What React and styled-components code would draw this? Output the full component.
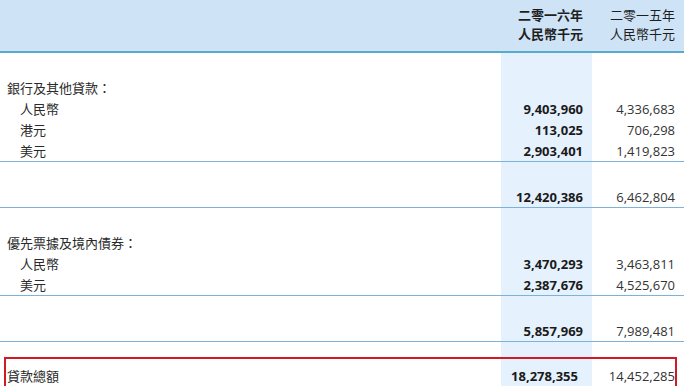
import React from "react";
import styled, { createGlobalStyle } from "styled-components";

const Global = createGlobalStyle`
  html, body { margin: 0; padding: 0; background: #ffffff; }
  body { font-family: "Open Sans", "Noto Sans CJK TC", sans-serif; }
`;

const Page = styled.div`
  width: 684px;
  height: 386px;
  overflow: hidden;
  background: #ffffff;
`;

const Header = styled.div`
  display: grid;
  grid-template-columns: 1fr 91px 92px;
  height: 51px;
  background: #cfe3f6;
  border-bottom: 2px solid #5aaacb;
  box-sizing: content-box;
`;

const HeadCell = styled.div`
  text-align: right;
  padding: 5px 9px 0 0;
  font-family: "Noto Sans CJK TC", sans-serif;
  font-size: 13px;
  line-height: 19px;
  color: #1e1e1e;
  font-weight: ${(p) => (p.$bold ? 700 : 400)};
`;

const Body = styled.div`
  background: linear-gradient(
    to right,
    transparent 501px,
    #e5f1fc 501px,
    #e5f1fc 592px,
    transparent 592px
  );
  padding-bottom: 20px;
`;

const Section = styled.div`
  padding-top: ${(p) => p.$top}px;
  border-bottom: ${(p) => (p.$line ? "1px solid #7db3da" : "none")};
`;

const TotalBox = styled.div`
  margin: 15px 7px 0 4px;
  border: 2px solid #d11a26;
  padding-top: 6px;
`;

const Row = styled.div`
  display: grid;
  grid-template-columns: 1fr 91px 92px;
  height: 21px;
  align-items: center;
`;

const Label = styled.div`
  font-family: "Noto Sans CJK TC", sans-serif;
  font-size: 13px;
  color: #2a2a2a;
  padding-left: ${(p) => p.$indent}px;
  white-space: nowrap;
`;

const Num = styled.div`
  text-align: right;
  font-family: "Open Sans", sans-serif;
  font-size: 13px;
  padding-right: ${(p) => p.$pr ?? 9}px;
  color: ${(p) => (p.$bold ? "#1a1a1a" : "#333333")};
  font-weight: ${(p) => (p.$bold ? 700 : 400)};
`;

function Line({ label, indent = 7, a, b, pa, pb }) {
  return (
    <Row>
      <Label $indent={indent}>{label}</Label>
      <Num $bold $pr={pa}>{a}</Num>
      <Num $pr={pb}>{b}</Num>
    </Row>
  );
}

export default function App() {
  return (
    <Page>
      <Global />
      <Header>
        <div />
        <HeadCell $bold>
          二零一六年
          <br />
          人民幣千元
        </HeadCell>
        <HeadCell>
          二零一五年
          <br />
          人民幣千元
        </HeadCell>
      </Header>
      <Body>
        <Section $top={24} $line>
          <Line label="銀行及其他貸款：" />
          <Line label="人民幣" indent={20} a="9,403,960" b="4,336,683" />
          <Line label="港元" indent={20} a="113,025" b="706,298" />
          <Line label="美元" indent={20} a="2,903,401" b="1,419,823" />
        </Section>
        <Section $top={24} $line>
          <Line label="" a="12,420,386" b="6,462,804" />
        </Section>
        <Section $top={24} $line>
          <Line label="優先票據及境內債券：" />
          <Line label="人民幣" indent={20} a="3,470,293" b="3,463,811" />
          <Line label="美元" indent={20} a="2,387,676" b="4,525,670" />
        </Section>
        <Section $top={24} $line>
          <Line label="" a="5,857,969" b="7,989,481" />
        </Section>
        <TotalBox>
          <Row>
            <Label $indent={1}>貸款總額</Label>
            <Num $bold $pr={5}>18,278,355</Num>
            <Num $pr={0}>14,452,285</Num>
          </Row>
        </TotalBox>
      </Body>
    </Page>
  );
}
